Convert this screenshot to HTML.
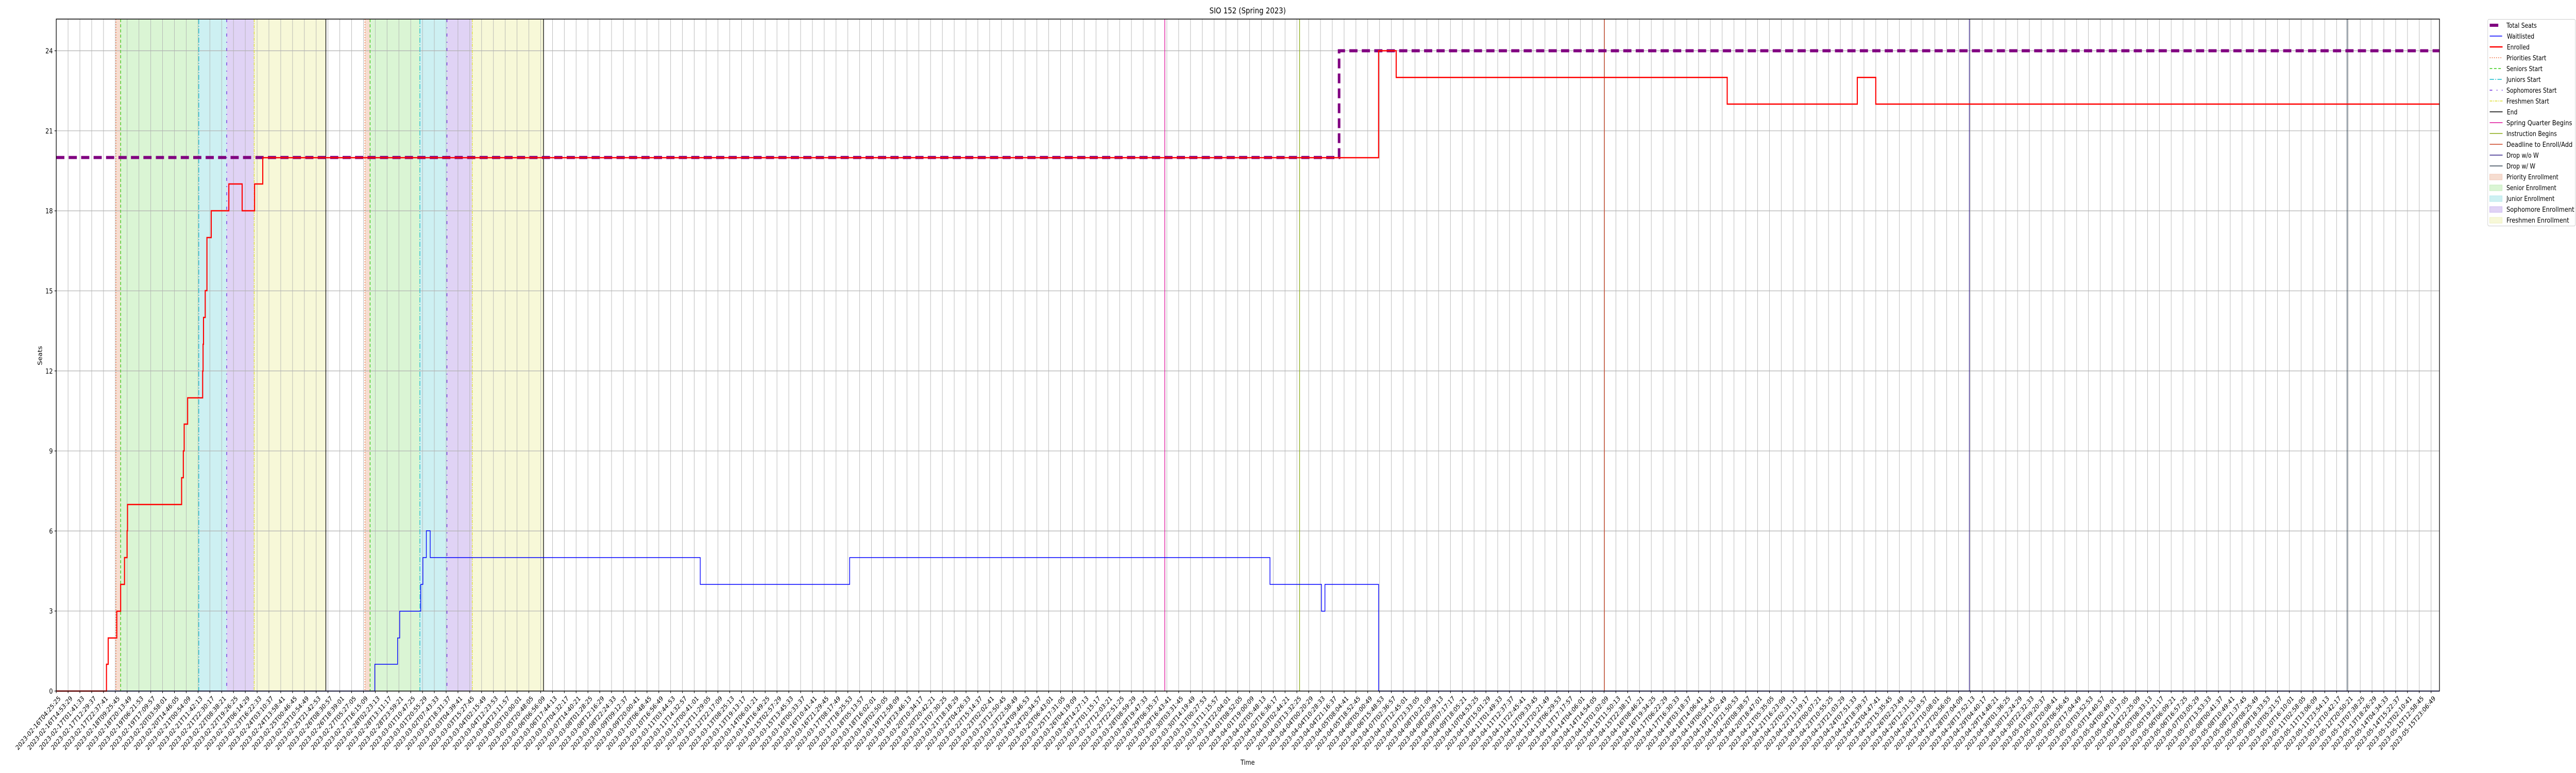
<!DOCTYPE html>
<html><head><meta charset="utf-8"><style>
html,body{margin:0;padding:0;background:#fff;width:100%;height:100%;overflow:hidden;}
svg{display:block;width:100vw;height:100vh;font-family:"DejaVu Sans","Liberation Sans",sans-serif;}
</style></head><body>
<svg id="c" viewBox="0 0 6000 1500" preserveAspectRatio="none" xmlns="http://www.w3.org/2000/svg" overflow="hidden">
<rect width="6000" height="1500" fill="#fff"/>
<g>
<rect x="270" y="37" width="11" height="1304" fill="#f6ddd0"/>
<rect x="281" y="37" width="182" height="1304" fill="#daf5d4"/>
<rect x="463" y="37" width="65" height="1304" fill="#cdf0f2"/>
<rect x="528" y="37" width="64" height="1304" fill="#e0d3f5"/>
<rect x="592" y="37" width="167" height="1304" fill="#f7f8d8"/>
<rect x="850" y="37" width="12" height="1304" fill="#f6ddd0"/>
<rect x="862" y="37" width="116" height="1304" fill="#daf5d4"/>
<rect x="978" y="37" width="63" height="1304" fill="#cdf0f2"/>
<rect x="1041" y="37" width="59" height="1304" fill="#e0d3f5"/>
<rect x="1100" y="37" width="166" height="1304" fill="#f7f8d8"/>
</g>
<g id="grid" stroke="#b0b0b0" stroke-width="1"></g>
<g id="hgrid" stroke="#b0b0b0" stroke-width="1.2"></g>
<g fill="none">
<line x1="270" y1="37" x2="270" y2="1341" stroke="#ee6633" stroke-width="1.5" stroke-dasharray="2,3"/>
<line x1="281" y1="37" x2="281" y2="1341" stroke="#33cc11" stroke-width="1.5" stroke-dasharray="6,4"/>
<line x1="463" y1="37" x2="463" y2="1341" stroke="#11bbcc" stroke-width="1.5" stroke-dasharray="10,3,2,3"/>
<line x1="528" y1="37" x2="528" y2="1341" stroke="#6622dd" stroke-width="1.5" stroke-dasharray="6,10,2,10"/>
<line x1="592" y1="37" x2="592" y2="1341" stroke="#dddd33" stroke-width="1.5" stroke-dasharray="6,2,2,2"/>
<line x1="759" y1="37" x2="759" y2="1341" stroke="#000" stroke-width="1.5"/>
<line x1="850" y1="37" x2="850" y2="1341" stroke="#ee6633" stroke-width="1.5" stroke-dasharray="2,3"/>
<line x1="862" y1="37" x2="862" y2="1341" stroke="#33cc11" stroke-width="1.5" stroke-dasharray="6,4"/>
<line x1="978" y1="37" x2="978" y2="1341" stroke="#11bbcc" stroke-width="1.5" stroke-dasharray="10,3,2,3"/>
<line x1="1041" y1="37" x2="1041" y2="1341" stroke="#6622dd" stroke-width="1.5" stroke-dasharray="6,10,2,10"/>
<line x1="1100" y1="37" x2="1100" y2="1341" stroke="#dddd33" stroke-width="1.5" stroke-dasharray="6,2,2,2"/>
<line x1="1266" y1="37" x2="1266" y2="1341" stroke="#000" stroke-width="1.5"/>
<line x1="2713" y1="37" x2="2713" y2="1341" stroke="#dd1199" stroke-width="1.5"/>
<line x1="3027" y1="37" x2="3027" y2="1341" stroke="#88aa11" stroke-width="1.5"/>
<line x1="3737" y1="37" x2="3737" y2="1341" stroke="#cc4422" stroke-width="1.5"/>
<line x1="4587" y1="37" x2="4587" y2="1341" stroke="#332288" stroke-width="1.5"/>
<line x1="5467" y1="37" x2="5467" y2="1341" stroke="#334455" stroke-width="1.5"/>
</g>
<path d="M131,305.6 H3119 V98.5 H5682" fill="none" stroke="#800080" stroke-width="6" stroke-dasharray="19,10"/>
<path d="M131,1341 H873 V1289 H926 V1238 H931 V1186 H980 V1134 H985 V1082 H993 V1030 H1002 V1082 H1631 V1134 H1979 V1082 H2958 V1134 H3078 V1186 H3086 V1134 H3211 V1341 H5682" fill="none" stroke="#0000ff" stroke-width="1.6"/>
<path d="M131,1341 H248 V1289 H252 V1238 H272 V1186 H281 V1134 H290 V1082 H296 V1030 H297 V979 H423 V927 H427 V875 H429 V823 H437 V772 H472 V720 H473 V668 H474 V616 H478 V564 H482 V461 H492 V409 H533 V357 H564 V409 H593 V357 H612 V306 H3211 V98.5 H3252 V150.3 H4023 V202 H4326 V150.3 H4369 V202 H5682" fill="none" stroke="#ff0000" stroke-width="2.5"/>
<rect x="131" y="37" width="5551" height="1304" fill="none" stroke="#000" stroke-width="1.5"/>
<g id="ticks" stroke="#000" stroke-width="1.2"></g>
<g id="xl" font-size="13" fill="#000"></g>
<g id="yl" font-size="13.5" fill="#000" text-anchor="end"></g>
<text x="2906" y="26" font-size="16" text-anchor="middle">SIO 152 (Spring 2023)</text>
<text x="2906" y="1484" font-size="13.5" text-anchor="middle">Time</text>
<text transform="translate(98,690) rotate(-90)" font-size="13.5" text-anchor="middle">Seats</text>
<g>
<rect x="5794.5" y="37.5" width="204" height="401" rx="3" fill="#fff" stroke="#cccccc" stroke-width="1"/>
<g font-size="13" fill="#000">
<line x1="5799" y1="49" x2="5819" y2="49" stroke="#800080" stroke-width="6"/><text x="5838" y="54">Total Seats</text>
<line x1="5799" y1="70" x2="5828" y2="70" stroke="#0000ff" stroke-width="1.5"/><text x="5839" y="75">Waitlisted</text>
<line x1="5799" y1="91" x2="5829" y2="91" stroke="#ff0000" stroke-width="2.5"/><text x="5839" y="96">Enrolled</text>
<line x1="5799" y1="112" x2="5829" y2="112" stroke="#ee6633" stroke-width="1.5" stroke-dasharray="2,3"/><text x="5838" y="117">Priorities Start</text>
<line x1="5799" y1="133" x2="5829" y2="133" stroke="#33cc11" stroke-width="1.5" stroke-dasharray="6,4"/><text x="5838" y="138">Seniors Start</text>
<line x1="5799" y1="154" x2="5829" y2="154" stroke="#11bbcc" stroke-width="1.5" stroke-dasharray="10,3,2,3"/><text x="5838" y="159">Juniors Start</text>
<line x1="5799" y1="175" x2="5829" y2="175" stroke="#6622dd" stroke-width="1.5" stroke-dasharray="6,10,2,10"/><text x="5838" y="180">Sophomores Start</text>
<line x1="5799" y1="196" x2="5829" y2="196" stroke="#dddd33" stroke-width="1.5" stroke-dasharray="6,2,2,2"/><text x="5838" y="201">Freshmen Start</text>
<line x1="5799" y1="217" x2="5829" y2="217" stroke="#000" stroke-width="1.5"/><text x="5839" y="222">End</text>
<line x1="5799" y1="238" x2="5829" y2="238" stroke="#dd1199" stroke-width="1.5"/><text x="5838" y="243" textLength="153" lengthAdjust="spacingAndGlyphs">Spring Quarter Begins</text>
<line x1="5799" y1="259" x2="5829" y2="259" stroke="#88aa11" stroke-width="1.5"/><text x="5838" y="264">Instruction Begins</text>
<line x1="5799" y1="280" x2="5829" y2="280" stroke="#cc4422" stroke-width="1.5"/><text x="5838" y="285" textLength="154" lengthAdjust="spacingAndGlyphs">Deadline to Enroll/Add</text>
<line x1="5799" y1="301" x2="5829" y2="301" stroke="#332288" stroke-width="1.5"/><text x="5838" y="306">Drop w/o W</text>
<line x1="5799" y1="322" x2="5829" y2="322" stroke="#334455" stroke-width="1.5"/><text x="5838" y="327">Drop w/ W</text>
<rect x="5799" y="338" width="29" height="11" fill="#f6ddd0" stroke="#f0c8b8"/><text x="5838" y="348">Priority Enrollment</text>
<rect x="5799" y="359" width="29" height="11" fill="#daf5d4" stroke="#c4ecbc"/><text x="5838" y="369">Senior Enrollment</text>
<rect x="5799" y="380" width="29" height="11" fill="#cdf0f2" stroke="#b6e8ec"/><text x="5838" y="390">Junior Enrollment</text>
<rect x="5799" y="401" width="29" height="11" fill="#e0d3f5" stroke="#cdb9f0"/><text x="5838" y="411" textLength="158" lengthAdjust="spacingAndGlyphs">Sophomore Enrollment</text>
<rect x="5799" y="422" width="29" height="11" fill="#f7f8d8" stroke="#eeefc0"/><text x="5838" y="432" textLength="146" lengthAdjust="spacingAndGlyphs">Freshmen Enrollment</text>
</g>
</g>
</svg>
<script>
(function(){
var NS="http://www.w3.org/2000/svg";
function el(p,n,a,t){var e=document.createElementNS(NS,n);for(var k in a)e.setAttribute(k,a[k]);if(t!==undefined)e.textContent=t;p.appendChild(e);return e;}
var grid=document.getElementById('grid'),ticks=document.getElementById('ticks'),xl=document.getElementById('xl'),yl=document.getElementById('yl'),hg=document.getElementById('hgrid');
var start=Date.UTC(2023,1,16,4,25,25);
function pad(n){return (n<10?'0':'')+n;}
for(var i=0;i<202;i++){
  var x=131+i*27.52;
  if(i>0) el(grid,'line',{x1:x,y1:37,x2:x,y2:1341});
  el(ticks,'line',{x1:x,y1:1341,x2:x,y2:1345});
  var jitter=((i*7919)%2400)-1200;
  var d=new Date(start+i*38165000+(i>0?jitter*1000:0));
  var s=d.getUTCFullYear()+'-'+pad(d.getUTCMonth()+1)+'-'+pad(d.getUTCDate())+'T'+pad(d.getUTCHours())+':'+pad(d.getUTCMinutes())+':'+pad(d.getUTCSeconds());
  el(xl,'text',{transform:'translate('+(x+4)+',1349) rotate(-45)','text-anchor':'end',dy:'10'},s);
}
for(var v=0;v<=24;v+=3){
  var y=1341-v*51.77;
  if(v>0) el(hg,'line',{x1:131,y1:y,x2:5682,y2:y});
  el(ticks,'line',{x1:127,y1:y,x2:131,y2:y});
  el(yl,'text',{x:123,y:y+5},String(v));
}
})();
</script>
</body></html>
